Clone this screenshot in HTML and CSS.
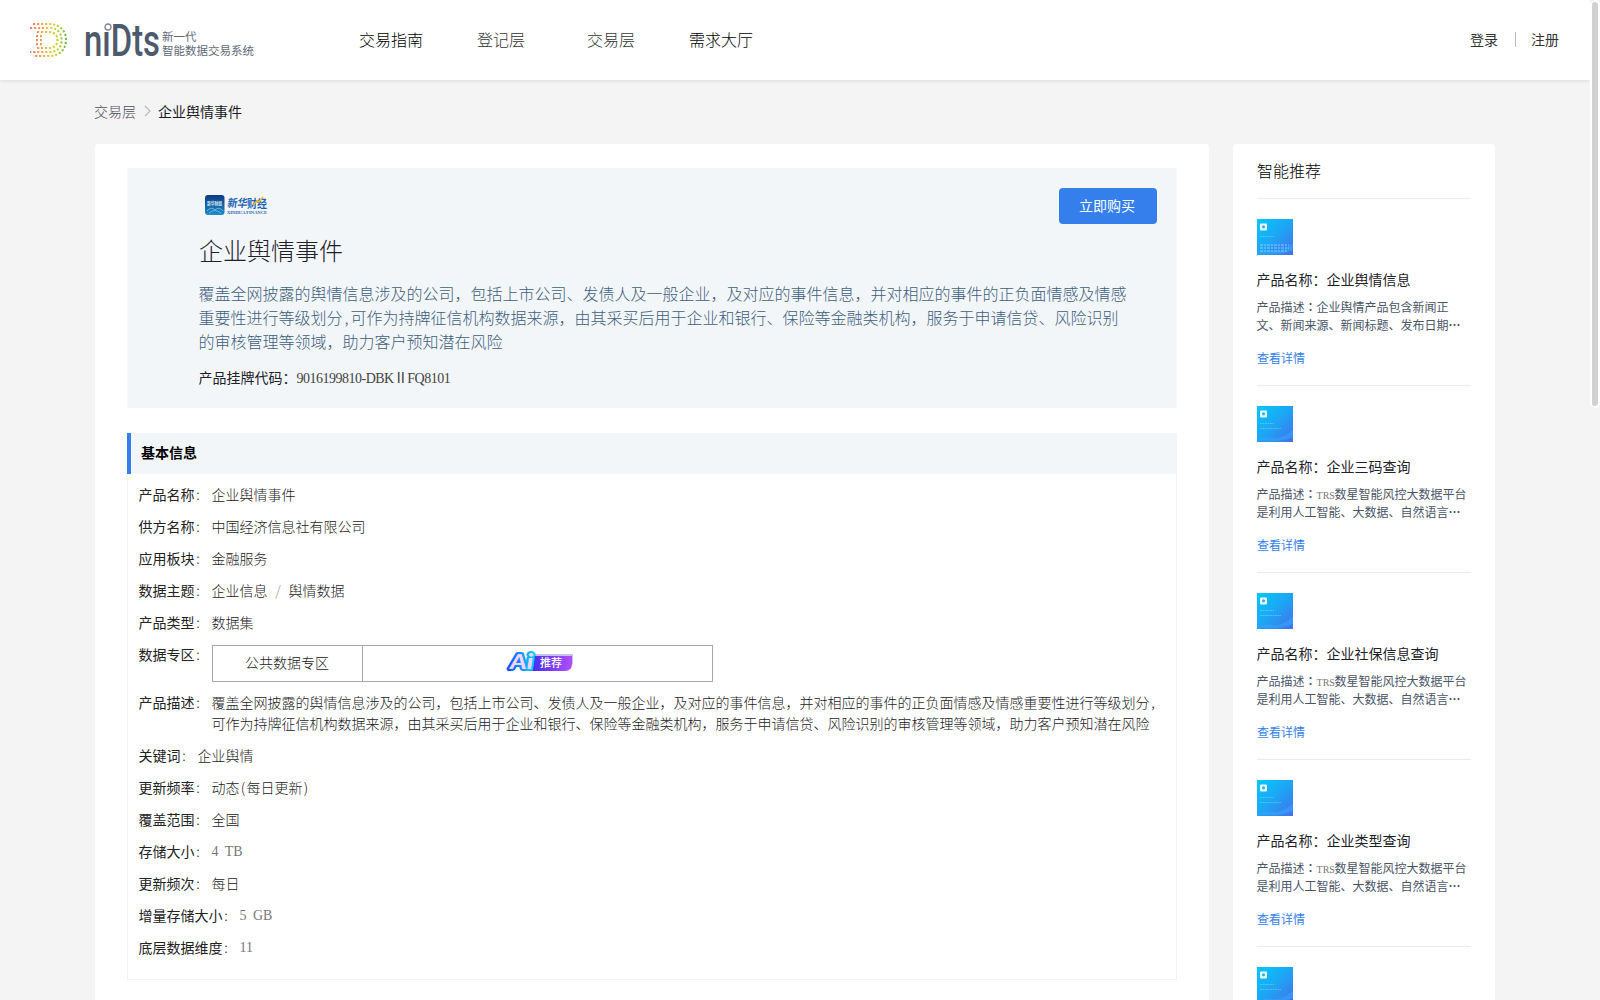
FILE: index.html
```html
<!DOCTYPE html>
<html lang="zh-CN">

<head>
    <meta charset="UTF-8">
    <meta name="viewport" content="width=device-width, initial-scale=1.0">
    <title>企业舆情事件</title>
    <link rel="stylesheet" href="styles.css">
</head>

<body>
    <div class="page">
        <header class="header">
            <a href="#" class="logo">
                <svg class="logo-mark" width="40" height="36" viewBox="0 0 40 36">
                    <defs>
                        <linearGradient id="dots" gradientUnits="userSpaceOnUse" x1="0" y1="0" x2="38" y2="0">
                            <stop offset="0" stop-color="#ee6a72" />
                            <stop offset="0.3" stop-color="#f39a55" />
                            <stop offset="0.6" stop-color="#e6cf35" />
                            <stop offset="0.82" stop-color="#b5cf2c" />
                            <stop offset="1" stop-color="#6dbb4f" />
                        </linearGradient>
                    </defs>
                    <g fill="none" stroke="url(#dots)" stroke-width="2" stroke-dasharray="2.2 1.8">
                        <path d="M5 2h16c11 0 17 7 17 16s-6 16-17 16H5" />
                        <path d="M2 6h19c9 0 12.5 5 12.5 12s-3.5 12-12.5 12H2" />
                        <path d="M9 10h12c6 0 8.5 4 8.5 8s-2.5 8-8.5 8H9" />
                        <path d="M9 13v12M13 13v12" />
                    </g>
                </svg>
                <svg class="logo-word" width="75" height="36" viewBox="0 0 75 36">
                    <text x="-1" y="34" textLength="76" lengthAdjust="spacingAndGlyphs">niDts</text>
                    <circle cx="23" cy="4.5" r="5" fill="#fff" />
                    <circle cx="23" cy="5" r="3" fill="none" stroke="#7b8493" stroke-width="1.3" />
                </svg>
                <span class="logo-text">新一代<br>智能数据交易系统</span>
            </a>
            <nav class="nav">
                <a href="#">交易指南</a>
                <a href="#" class="light">登记层</a>
                <a href="#" class="light">交易层</a>
                <a href="#">需求大厅</a>
            </nav>
            <div class="user">
                <a href="#">登录</a>
                <i></i>
                <a href="#">注册</a>
            </div>
        </header>

        <div class="crumb">
            <span>交易层</span>
            <svg width="7" height="12" viewBox="0 0 7 12"><path d="M1 1l5 5-5 5" fill="none" stroke="#b9bcc4" stroke-width="1.2" /></svg>
            <b>企业舆情事件</b>
        </div>

        <div class="content">
            <main class="main">
                <section class="banner">
                    <div class="banner-top">
                        <svg width="66" height="24" viewBox="0 0 66 24">
                            <defs>
                                <linearGradient id="xh" x1="0" y1="0" x2="0" y2="1">
                                    <stop offset="0" stop-color="#0d3b83" />
                                    <stop offset="1" stop-color="#1f8cc8" />
                                </linearGradient>
                            </defs>
                            <rect x="0" y="2" width="19.5" height="20" rx="3" fill="url(#xh)" />
                            <text x="2" y="11.5" class="xh-app" textLength="15" lengthAdjust="spacingAndGlyphs">新华财经</text>
                            <path d="M2 18q4-5 8-1q4-4 8 1M4 20q6-5 12 0" fill="none" stroke="#78c2e8" stroke-width="0.8" />
                            <text x="22" y="14.5" class="xh-name" textLength="20" lengthAdjust="spacingAndGlyphs" transform="skewX(-8) translate(2 0)">新华</text>
                            <text x="42" y="14.5" class="xh-name" textLength="20" lengthAdjust="spacingAndGlyphs">财经</text>
                            <path d="M48 12l4-4 2 1 4-5" fill="none" stroke="#f2b42c" stroke-width="1.6" />
                            <text x="22" y="21" class="xh-en" textLength="40" lengthAdjust="spacingAndGlyphs">XINHUA FINANCE</text>
                        </svg>
                        <button class="buy">立即购买</button>
                    </div>
                    <h1>企业舆情事件</h1>
                    <p class="intro">覆盖全网披露的舆情信息涉及的公司，包括上市公司、发债人及一般企业，及对应的事件信息，并对相应的事件的正负面情感及情感重要性进行等级划分<span class="comma">,</span>可作为持牌征信机构数据来源，由其采买后用于企业和银行、保险等金融类机构，服务于申请信贷、风险识别的审核管理等领域，助力客户预知潜在风险</p>
                    <div class="code">产品挂牌代码：<span class="half">9016199810-DBK<em>Ⅱ</em>FQ8101</span></div>
                </section>

                <section class="info">
                    <h2>基本信息</h2>
                    <ul>
                        <li><label>产品名称</label><i>:</i><div>企业舆情事件</div></li>
                        <li><label>供方名称</label><i>:</i><div>中国经济信息社有限公司</div></li>
                        <li><label>应用板块</label><i>:</i><div>金融服务</div></li>
                        <li><label>数据主题</label><i>:</i><div>企业信息<s>/</s>舆情数据</div></li>
                        <li><label>产品类型</label><i>:</i><div>数据集</div></li>
                        <li><label>数据专区</label><i>:</i>
                            <div class="zone">
                                <span>公共数据专区</span>
                                <span>
                                    <svg width="68" height="22" viewBox="0 0 68 22">
                                        <defs>
                                            <linearGradient id="tag" x1="0" y1="0" x2="1" y2="0">
                                                <stop offset="0" stop-color="#3a2df5" />
                                                <stop offset="1" stop-color="#b34dff" />
                                            </linearGradient>
                                            <linearGradient id="ai" x1="0" y1="0" x2="1" y2="0">
                                                <stop offset="0" stop-color="#0a55ff" />
                                                <stop offset="1" stop-color="#10d0fb" />
                                            </linearGradient>
                                        </defs>
                                        <path d="M27 3h39v10l-7 6H27z" fill="#c9bdf7" />
                                        <path d="M25 5h40v8q0 7-7 7H22z" fill="url(#tag)" />
                                        <text x="3" y="18" class="ai" textLength="23" lengthAdjust="spacingAndGlyphs" stroke="url(#ai)">Ai</text>
                                        <text x="33" y="16" class="tag">推荐</text>
                                    </svg>
                                </span>
                            </div>
                        </li>
                        <li><label>产品描述</label><i>:</i><div>覆盖全网披露的舆情信息涉及的公司，包括上市公司、发债人及一般企业，及对应的事件信息，并对相应的事件的正负面情感及情感重要性进行等级划分<span class="comma">,</span>可作为持牌征信机构数据来源，由其采买后用于企业和银行、保险等金融类机构，服务于申请信贷、风险识别的审核管理等领域，助力客户预知潜在风险</div></li>
                        <li><label>关键词</label><i>:</i><div>企业舆情</div></li>
                        <li><label>更新频率</label><i>:</i><div>动态<span class="paren">(</span>每日更新<span class="paren">)</span></div></li>
                        <li><label>覆盖范围</label><i>:</i><div>全国</div></li>
                        <li><label>存储大小</label><i>:</i><div class="latin">4 TB</div></li>
                        <li><label>更新频次</label><i>:</i><div>每日</div></li>
                        <li><label>增量存储大小</label><i>:</i><div class="latin">5 GB</div></li>
                        <li><label>底层数据维度</label><i>:</i><div class="latin">11</div></li>
                    </ul>
                </section>
            </main>

            <aside class="side">
                <h3>智能推荐</h3>
                <div id="list"></div>
            </aside>
        </div>

        <div class="scrollbar"></div>
    </div>
    <script>
        var trs = '<span class="trs">TRS</span>数星智能风控大数据平台是利用人工智能、大数据、自然语言<b>…</b>';
        var arr = [
            { name: '企业舆情信息', desc: '企业舆情产品包含新闻正文、新闻来源、新闻标题、发布日期<b>…</b>', first: true },
            { name: '企业三码查询', desc: trs },
            { name: '企业社保信息查询', desc: trs },
            { name: '企业类型查询', desc: trs }
        ];
        // 封面图
        function cover(i, first) {
            var lines = first
                ? '<path d="M3 17.5h14" stroke-dasharray="2 .5"/><path d="M3 26h29M3 29h29M3 32h28" stroke-width="2" stroke-dasharray="3 1 2 1"/>'
                : '<path d="M3 17.5h14M3 22.5h21" stroke-dasharray="2 .5"/>';
            return `<svg width="36" height="36" viewBox="0 0 36 36">
                    <defs>
                        <linearGradient id="c${i}" x1="0" y1="0" x2="1" y2="1">
                            <stop offset="0" stop-color="#04c8fc"/>
                            <stop offset="0.5" stop-color="#1da5f4"/>
                            <stop offset="1" stop-color="#4570ea"/>
                        </linearGradient>
                    </defs>
                    <rect width="36" height="36" fill="url(#c${i})"/>
                    <path d="M0 34Q9 30 16 32T36 24V31Q24 36 14 35T0 36z" fill="#35a5f8" opacity=".6"/>
                    <rect x="3" y="4.5" width="7" height="7" rx="1" fill="#e9f9ff"/>
                    <circle cx="6.5" cy="7.8" r="1.6" fill="#35b2ee"/>
                    <g fill="none" stroke="#9fdcff" stroke-width="1" opacity=".4">${lines}</g>
                </svg>`;
        }
        var html = '';
        arr.forEach(function (item, i) {
            html += `<div class="item">
                ${cover(i, item.first)}
                <h4>产品名称：${item.name}</h4>
                <p>产品描述<span class="colon" lang="zh-TW">：</span>${item.desc}</p>
                <a href="#">查看详情</a>
            </div>`;
        });
        html += `<div class="item">${cover(arr.length)}</div>`;
        document.getElementById('list').innerHTML = html;
    </script>
</body>

</html>
```
FILE: styles.css
```css
* {
    box-sizing: border-box;
}

body {
    margin: 0;
    font-family: "Noto Sans CJK SC", sans-serif;
    font-size: 14px;
    font-weight: 300;
    color: #1d2129;
    background: #f4f4f4;
}

h1, h2, h3, h4, p, ul {
    margin: 0;
    padding: 0;
    font-weight: 300;
}

ul {
    list-style: none;
}

a {
    color: inherit;
    text-decoration: none;
}

i, em, s {
    font-style: normal;
    text-decoration: none;
}

svg {
    display: block;
    overflow: visible;
}

.page {
    position: relative;
    height: 1000px;
    padding-right: 10px;
    overflow: hidden;
}

/* header */
.header {
    display: flex;
    align-items: center;
    height: 80px;
    padding: 0 31px 0 28px;
    background: #fff;
    box-shadow: 0 1px 4px rgba(0, 0, 0, .1);
}

.logo {
    display: flex;
    width: 308px;
}

.logo-word {
    margin: 0 2px 0 17px;
}

.logo-word text {
    font: 500 45px Roboto, sans-serif;
    fill: #4d5a6c;
}

.logo-text {
    padding-top: 7px;
    font-size: 11.5px;
    line-height: 14px;
    font-weight: 400;
    color: #5f697a;
    white-space: nowrap;
}

.nav {
    display: flex;
    padding-bottom: 2px;
    font-size: 16px;
    color: #000;
}

.nav a {
    width: 110px;
    text-align: center;
}

.nav .light {
    color: #333;
}

.user {
    display: flex;
    align-items: center;
    margin-left: auto;
    padding-bottom: 2px;
    font-weight: 400;
    color: #333;
}

.user i {
    width: 1px;
    height: 15px;
    margin: 0 15px 0 17px;
    background: #bbb;
}

/* breadcrumb */
.crumb {
    display: flex;
    align-items: center;
    width: 1400px;
    height: 64px;
    margin: 0 auto;
    padding-bottom: 2px;
    color: #4b4e5b;
}

.crumb span {
    margin-left: -1px;
}

.crumb svg {
    margin: 0 7px 0 8px;
}

.crumb b {
    font-weight: 400;
    color: #1a1a26;
}

.content {
    display: flex;
    align-items: flex-start;
    gap: 24px;
    width: 1400px;
    margin: 0 auto;
}

.main {
    width: 1114px;
    height: 900px;
    padding: 24px 32px;
    background: #fff;
    border-radius: 4px;
}

.banner {
    height: 240px;
    padding: 20px 20px 0 72px;
    background: #f2f6f9;
}

.banner-top {
    display: flex;
    justify-content: space-between;
    align-items: flex-start;
    height: 45px;
}

.banner-top svg {
    margin: 5px 0 0 6px;
}

.xh-app {
    font-size: 5px;
    font-weight: 700;
    fill: #dcebf7;
}

.xh-name {
    font-size: 11px;
    font-weight: 700;
    fill: #1d62b4;
}

.xh-en {
    font: 700 5px "Liberation Serif", serif;
    fill: #1d62b4;
}

.buy {
    width: 98px;
    height: 36px;
    padding: 0 2px 2px 0;
    border: 0;
    border-radius: 4px;
    font: inherit;
    font-weight: 400;
    color: #fff;
    background: #357fed;
}

.banner h1 {
    font-size: 24px;
    line-height: 34px;
}

.intro {
    width: 930px;
    margin-top: 14px;
    margin-left: -.5px;
    font-size: 16px;
    line-height: 24px;
    color: #3f5e7d;
}

.comma,
.paren {
    display: inline-block;
    width: .5em;
    text-align: center;
}

.code {
    margin: 14px 0 0 -.5px;
    line-height: 20px;
    font-weight: 400;
}

.half,
.latin,
.trs {
    font-family: "Liberation Serif", "Noto Sans CJK SC", serif;
    font-weight: 400;
}

.half {
    letter-spacing: -.5px;
    color: #444;
}

.trs {
    display: inline-block;
    width: 18px;
    font-size: 10px;
    line-height: 1;
    color: #777;
}

/* info */
.info {
    height: 547px;
    margin-top: 25px;
    border: 1px solid #f4f4f5;
    border-top: 0;
}

.info h2 {
    height: 41px;
    margin-left: -1px;
    padding-left: 10px;
    border-left: 4px solid #357fed;
    font-size: 14px;
    font-weight: 700;
    line-height: 38px;
    color: #000;
    background: #f2f6f9;
}

.info ul {
    padding: 10px 10px 0 10.5px;
}

.info li {
    display: flex;
    margin-bottom: 11px;
    line-height: 21px;
}

.info label {
    flex: none;
    font-weight: 400;
    color: #222;
}

.info li i {
    flex: none;
    width: 7px;
    margin-right: 10px;
    text-align: center;
}

.info li div {
    color: #222;
}

.info s {
    display: inline-block;
    width: 21px;
    text-align: center;
    color: #999;
}

.info .latin {
    color: #777;
    word-spacing: 3px;
}

.info .zone {
    display: flex;
    width: 501px;
    height: 37px;
    margin: 1px 0 -1px;
    border: 1px solid #a6a6a6;
}

.zone span {
    display: flex;
    justify-content: center;
    flex: 1;
    line-height: 33px;
}

.zone span:first-child {
    flex: none;
    width: 150px;
    border-right: 1px solid #a6a6a6;
}

.zone svg {
    margin: 5px 0 0 8px;
}

.ai {
    font: italic 900 21px Lato, sans-serif;
    fill: #f3d4ff;
    stroke-width: 4px;
    paint-order: stroke;
    stroke-linejoin: round;
}

.tag {
    font-size: 11px;
    font-weight: 500;
    fill: #fff;
}

/* side */
.side {
    width: 262px;
    height: 900px;
    padding: 0 24px;
    background: #fff;
    border-radius: 4px;
}

.side h3 {
    height: 55px;
    border-bottom: 1px solid #ebebf2;
    font-size: 16px;
    line-height: 52px;
    color: #000;
}

.item {
    height: 187px;
    padding-top: 20px;
    border-bottom: 1px solid #ebebee;
}

.item h4 {
    margin: 13px 0 0 -.5px;
    font-size: 14px;
    line-height: 22px;
    font-weight: 400;
}

.item p {
    height: 36px;
    margin: 8px 0 0 -.5px;
    font-size: 12px;
    line-height: 18px;
    font-weight: 400;
    color: #4a5566;
}

.colon {
    font-family: "Noto Sans CJK TC", sans-serif;
    font-weight: 500;
}

.item a {
    display: block;
    margin-top: 15px;
    font-size: 12px;
    line-height: 18px;
    font-weight: 400;
    color: #357fed;
}

.scrollbar {
    position: absolute;
    top: 0;
    right: 0;
    width: 10px;
    height: 408px;
    border: 2px solid #fff;
    border-radius: 5px;
    background: #d1d1d1;
}
```
